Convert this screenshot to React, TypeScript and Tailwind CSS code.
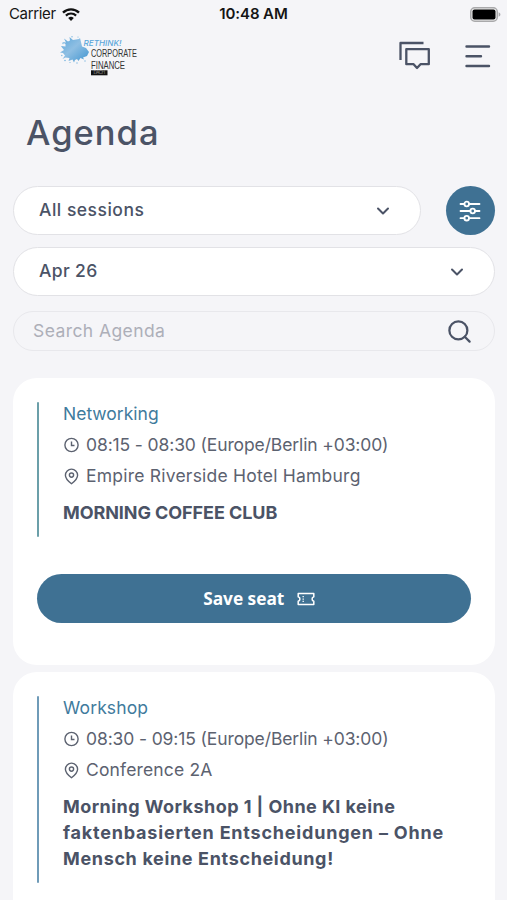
import { ChevronDown, Search } from 'lucide-react';

const sessions = [
  {
    id: 1,
    category: 'Networking',
    categoryClass: 'tracking-[0px]',
    time: '08:15 - 08:30 (Europe/Berlin +03:00)',
    timeClass: 'tracking-[-0.12px]',
    location: 'Empire Riverside Hotel Hamburg',
    locationClass: 'tracking-[0.22px]',
    title: [{ text: 'MORNING COFFEE CLUB', className: 'tracking-[-0.08px]' }],
    line: 'bg-[#6b9fa9]',
    canSave: true,
  },
  {
    id: 2,
    category: 'Workshop',
    categoryClass: 'tracking-[0.14px]',
    time: '08:30 - 09:15 (Europe/Berlin +03:00)',
    timeClass: 'tracking-[-0.12px]',
    location: 'Conference 2A',
    locationClass: 'tracking-[0.15px]',
    title: [
      { text: 'Morning Workshop 1 | Ohne KI keine', className: 'tracking-[0.45px]' },
      { text: 'faktenbasierten Entscheidungen – Ohne', className: 'tracking-[0.79px]' },
      { text: 'Mensch keine Entscheidung!', className: 'tracking-[0.65px]' },
    ],
    line: 'bg-[#6f9bb8]',
    canSave: false,
  },
];

const WifiIcon = () => (
  <svg width="18" height="13" viewBox="0 0 18 13" fill="none">
    <path d="M1 4.6a11.5 11.5 0 0 1 16 0" stroke="#111" strokeWidth="2.4" />
    <path d="M3.9 7.6a7.3 7.3 0 0 1 10.2 0" stroke="#111" strokeWidth="2.2" />
    <path d="M9 13 6.2 10a4 4 0 0 1 5.6 0Z" fill="#111" />
  </svg>
);

const BatteryIcon = () => (
  <svg width="31" height="15" viewBox="0 0 31 15">
    <rect x="0.75" y="0.75" width="26.5" height="13.5" rx="4" fill="#eee" stroke="#a9a9ab" strokeWidth="1.5" />
    <rect x="2.5" y="2.5" width="23" height="10" rx="2" fill="#000" />
    <path d="M28.6 5.2c1.2.5 1.8 1.3 1.8 2.3s-.6 1.8-1.8 2.3Z" fill="#a9a9ab" />
  </svg>
);

const Logo = () => (
  <svg width="82" height="44" viewBox="0 0 82 44">
    <defs>
      <linearGradient id="splash" x1="0" y1="0" x2="1" y2="1">
        <stop offset="0" stopColor="#5ba6da" />
        <stop offset="0.45" stopColor="#8fbfe3" />
        <stop offset="1" stopColor="#3f94d0" />
      </linearGradient>
    </defs>
    <path
      d="M4 3.5 8 6.5l2-1L9.5 2 13 5l6-1 1-1 1 4 1 4.5 4 1.5 3 4-2 4-4 1.5 1 2-3.5-1.5-2 3-1.5-2-2 1-1 2.5-1.5-3-4 1.5 1-3-4-.5-3 1.5 2.5-3.5L3 18l-3-.5L4 15l-2-2.5-1-1.5 4.5.5L5.5 9 2 7l4 .5Z"
      fill="url(#splash)"
    />
    <g fill="#7db8e0">
      <circle cx="3" cy="8.5" r="0.7" />
      <circle cx="12" cy="1.8" r="0.7" />
      <circle cx="18" cy="2" r="0.6" />
      <circle cx="5" cy="25.5" r="0.8" />
      <circle cx="10" cy="27.5" r="0.6" />
      <circle cx="25" cy="26" r="0.7" />
      <circle cx="1.8" cy="20.5" r="0.7" />
      <circle cx="17" cy="28" r="0.7" />
    </g>
    <text x="23.5" y="11.2" fontFamily="Inter, sans-serif" fontSize="8" fontStyle="italic" fontWeight="500" fill="#5aa6da" textLength="38" lengthAdjust="spacingAndGlyphs">
      RETHINK!
    </text>
    <text x="31" y="22" fontFamily="'Liberation Sans', sans-serif" fontSize="11.5" fill="#333" textLength="46" lengthAdjust="spacingAndGlyphs">
      CORPORATE
    </text>
    <text x="31" y="33.5" fontFamily="'Liberation Sans', sans-serif" fontSize="11.5" fill="#333" textLength="34" lengthAdjust="spacingAndGlyphs">
      FINANCE
    </text>
    <rect x="31" y="35.3" width="16.5" height="5" fill="#111" />
    <text x="33.5" y="39.4" fontFamily="Inter, sans-serif" fontSize="4.5" fill="#999" textLength="11.5">
      DACH
    </text>
  </svg>
);

const ChatIcon = () => (
  <svg width="32" height="30" viewBox="0 0 32 30" fill="none" stroke="#4b5366" strokeWidth="2.3">
    <path d="M1.5 19V2H24.5" strokeLinejoin="round" />
    <path d="M7.3 8.2H29.8V23.2H21.5L18 27 14.6 23.2H7.3Z" strokeLinejoin="round" />
  </svg>
);

const MenuIcon = () => (
  <svg width="26" height="24" viewBox="0 0 26 24" stroke="#4b5366" strokeWidth="2.4" strokeLinecap="round">
    <path d="M1.5 2.5H24M1.5 12.3H16M1.5 22H24" />
  </svg>
);

const FilterIcon = () => (
  <svg width="22" height="22" viewBox="0 0 22 22" fill="none" stroke="#fff" strokeWidth="1.8" strokeLinecap="round">
    <path d="M1.5 4H5.4M10 4H20.5M1.5 11H11.4M16 11H20.5M1.5 18.2H5.4M10 18.2H20.5" />
    <circle cx="7.7" cy="4" r="2.3" />
    <circle cx="13.7" cy="11" r="2.3" />
    <circle cx="7.7" cy="18.2" r="2.3" />
  </svg>
);

const ClockIcon = () => (
  <svg width="16" height="16" viewBox="0 0 16 16" fill="none" stroke="#5c6270" strokeWidth="1.4">
    <circle cx="8.5" cy="8" r="6.6" />
    <path d="M8.5 4.6V8.5H11.5" />
  </svg>
);

const PinIcon = () => (
  <svg width="16" height="17" viewBox="0 0 16 17" fill="none" stroke="#5c6270" strokeWidth="1.4">
    <path d="M8.5 15.7C5.7 13.6 2.4 10.8 2.4 7.2a6.1 6.1 0 0 1 12.2 0C14.6 10.8 11.3 13.6 8.5 15.7Z" strokeLinejoin="round" />
    <circle cx="8.5" cy="7.1" r="2.1" />
  </svg>
);

const TicketIcon = () => (
  <svg width="18" height="14" viewBox="0 0 18 14" fill="none" stroke="#fff" strokeWidth="1.5">
    <path d="M1.2 1.5H16.8V4.7a2.4 2.4 0 0 0 0 4.6V12.5H1.2V9.3a2.4 2.4 0 0 0 0-4.6Z" strokeLinejoin="round" />
    <path d="M6.2 4V5.3M6.2 6.4V7.7M6.2 8.8V10.1" strokeWidth="1.3" />
  </svg>
);

const App = () => {
  return (
    <div className="flex h-[900px] w-[507px] flex-col overflow-hidden bg-[#f5f5f8] font-['Inter',sans-serif] text-[#4b5366]">
      <div className="grid h-7 shrink-0 grid-cols-3 items-center pr-1.5 pl-[9px] text-[15px] text-[#151515]">
        <div className="flex items-center gap-1.5">
          <span className="tracking-[-0.35px]">Carrier</span>
          <WifiIcon />
        </div>
        <span className="pr-[3px] text-center font-semibold tracking-[-0.1px]">10:48 AM</span>
        <div className="flex justify-end">
          <BatteryIcon />
        </div>
      </div>

      <header className="flex h-[62px] shrink-0 items-start justify-between pr-4 pl-[60px]">
        <div className="pt-[7px]">
          <Logo />
        </div>
        <div className="flex items-center gap-[34px] pt-[13px]">
          <ChatIcon />
          <MenuIcon />
        </div>
      </header>

      <h1 className="mt-[21px] shrink-0 pl-[26px] text-[34.5px] leading-[44px] font-medium tracking-[1px]">Agenda</h1>

      <div className="mt-[31px] flex shrink-0 flex-col pr-[12.5px] pl-[13px]">
        <div className="flex items-center justify-between">
          <div className="flex h-[49px] w-[408px] items-center justify-between rounded-full border border-[#e2e2e6] bg-white pr-[27px] pl-[25px]">
            <span className="text-[17.5px] font-medium tracking-[0.5px]">All sessions</span>
            <ChevronDown size={20} strokeWidth={2.4} />
          </div>
          <button className="flex size-[48.5px] items-center justify-center rounded-full bg-[#3f7193]">
            <FilterIcon />
          </button>
        </div>
        <div className="mt-3 flex h-[49px] items-center justify-between rounded-full border border-[#e2e2e6] bg-white pr-[27px] pl-[25px]">
          <span className="text-[17.5px] font-medium tracking-[0.35px]">Apr 26</span>
          <ChevronDown size={20} strokeWidth={2.4} />
        </div>
        <div className="mt-[15px] flex h-10 items-center justify-between rounded-full border border-[#e8e8ec] pr-[21px] pl-[19px]">
          <span className="text-[17.5px] tracking-[0.42px] text-[#adafb8]">Search Agenda</span>
          <Search size={27} strokeWidth={2} />
        </div>
      </div>

      <main className="mt-[27px] flex flex-col gap-[7px] pr-[12.5px] pl-[13px]">
        {sessions.map((session) => (
          <article key={session.id} className="shrink-0 rounded-[24px] bg-white px-6 pt-6 pb-[42px]">
            <div className="flex">
              <div className={`w-[2px] shrink-0 rounded-full ${session.line}`} />
              <div className="pb-[11px] pl-[24px] whitespace-nowrap">
                <p className={`text-[17.5px] leading-6 text-[#3f7b9d] ${session.categoryClass}`}>{session.category}</p>
                <div className="mt-[7px] flex h-6 items-center gap-[7px] text-[17.5px] text-[#5c6270]">
                  <ClockIcon />
                  <span className={session.timeClass}>{session.time}</span>
                </div>
                <div className="mt-[7px] flex h-6 items-center gap-[7px] text-[17.5px] text-[#5c6270]">
                  <PinIcon />
                  <span className={session.locationClass}>{session.location}</span>
                </div>
                <h2 className="mt-3 text-[18px] leading-[26px] font-bold">
                  {session.title.map((row) => (
                    <span key={row.text} className={`block ${row.className}`}>
                      {row.text}
                    </span>
                  ))}
                </h2>
              </div>
            </div>
            {session.canSave && (
              <button className="mt-[37px] flex h-[49px] w-full items-center justify-center gap-[13px] rounded-full bg-[#3f7193] pl-[11px] font-['Open_Sans',sans-serif] text-[17.3px] font-bold text-white">
                Save seat
                <TicketIcon />
              </button>
            )}
          </article>
        ))}
      </main>
    </div>
  );
};

export default App;
